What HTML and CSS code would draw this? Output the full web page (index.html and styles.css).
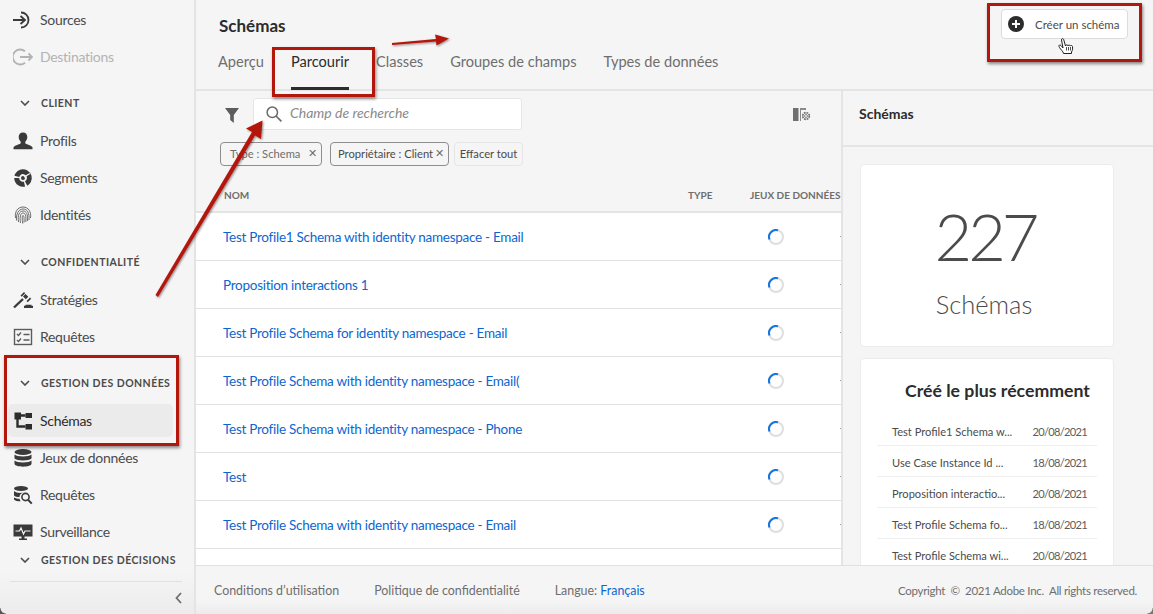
FILE: index.html
```html
<!DOCTYPE html>
<html lang="fr">
<head>
<meta charset="utf-8">
<title>Schémas</title>
<link rel="stylesheet" href="styles.css">
</head>
<body>
<div class="app">
  <aside class="sidebar">
    <nav class="nav">
      <a class="item"><svg class="ico" viewBox="0 0 20 20"><path d="M8 2.500a7.500 7.500 0 1 1 0 15" fill="none" stroke="#3a3a3a" stroke-width="1.8"/><path d="M0 10h11M7.500 6l4.500 4-4.500 4" fill="none" stroke="#3a3a3a" stroke-width="1.8"/></svg>Sources</a>
      <a class="item off"><svg class="ico" viewBox="0 0 20 20"><path d="M12 4.200A7.500 7.500 0 1 0 12 15.800" fill="none" stroke="#b3b3b3" stroke-width="1.8"/><path d="M7 10h12M15.500 6.500l3.500 3.500-3.500 3.500" fill="none" stroke="#b3b3b3" stroke-width="1.8"/></svg>Destinations</a>

      <div class="sec"><svg class="chev" viewBox="0 0 10 6"><path d="M1 1l4 4 4-4" fill="none" stroke="#4b4b4b" stroke-width="1.6"/></svg>CLIENT</div>
      <a class="item"><svg class="ico" viewBox="0 0 20 20"><path d="M10 1.500c2.800 0 4.300 2 4.300 4.500 0 2-1 3.700-2 4.700v1.500c0 1 5.700 1.500 7.200 4v2H.5v-2c1.500-2.500 7.200-3 7.200-4v-1.500c-1-1-2-2.700-2-4.700 0-2.500 1.500-4.500 4.300-4.500z" fill="#3a3a3a"/></svg>Profils</a>
      <a class="item"><svg class="ico" viewBox="0 0 20 20"><circle cx="10" cy="10" r="6.300" fill="none" stroke="#3a3a3a" stroke-width="5" stroke-dasharray="13 1.600 11 1.600 11.400 1.600" transform="rotate(-60 10 10)"/><circle cx="10" cy="10" r="2" fill="#3a3a3a"/><path d="M11 9l6-3.500" stroke="#f5f5f5" stroke-width="1.300"/></svg>Segments</a>
      <a class="item"><svg class="ico" viewBox="0 0 20 20"><g fill="none" stroke="#5c5c5c" stroke-width=".9"><path d="M2.500 13C1.500 7 4.500 2 10 2s8.500 5 7.500 11"/><path d="M3.500 15.500C3 9 5.500 4 10 4s6.500 4 6 11"/><path d="M5.500 17C4.500 10 6.500 6 10 6s5 3.500 4.500 10"/><path d="M7.500 18C6.500 12 7.500 8 10 8s3.300 3 2.800 9"/><path d="M9.800 18.500C9 14 9 10.500 10 10.500s1.300 3 1 7"/></g></svg>Identités</a>

      <div class="sec tall"><svg class="chev" viewBox="0 0 10 6"><path d="M1 1l4 4 4-4" fill="none" stroke="#4b4b4b" stroke-width="1.6"/></svg>CONFIDENTIALITÉ</div>
      <a class="item"><svg class="ico" viewBox="0 0 20 20"><path d="M1 17.500L10 9" stroke="#3a3a3a" stroke-width="2.400" fill="none"/><path d="M7.500 5.500l3.500-3.500 1.200 1.200-3.500 3.500zM10 6.500l2.500-2.500 2.800 2.800-2.500 2.500zM13.500 11l3.500-3.500 1.200 1.200-3.500 3.500z" fill="#3a3a3a"/><path d="M11 18h9v-2.200h-1.500v-1H12.500v1H11z" fill="#3a3a3a"/></svg>Stratégies</a>
      <a class="item"><svg class="ico" viewBox="0 0 20 20"><rect x="1.500" y="2.500" width="17" height="15" fill="none" stroke="#5c5c5c" stroke-width="1.400"/><path d="M4 7l1.500 1.500L8 5.500M4 13l1.500 1.500L8 11.500M10.500 7.500h6M10.500 13h6" fill="none" stroke="#5c5c5c" stroke-width="1.400"/></svg>Requêtes</a>

      <div class="sec"><svg class="chev" viewBox="0 0 10 6"><path d="M1 1l4 4 4-4" fill="none" stroke="#4b4b4b" stroke-width="1.6"/></svg>GESTION DES DONNÉES</div>
      <a class="item on"><svg class="ico" viewBox="0 0 20 20"><path d="M1.500 1.500h6.500v7H1.500zM12.500 2h6.500v5h-6.500zM12.500 13h6.500v5.500h-6.500z" fill="#2c2c2c"/><path d="M4.500 8v7.500h8M8 4.500h4.500" fill="none" stroke="#2c2c2c" stroke-width="2.400"/></svg>Schémas</a>
      <a class="item"><svg class="ico" viewBox="0 0 20 20"><ellipse cx="10" cy="4" rx="8.500" ry="3" fill="#3a3a3a"/><path d="M1.500 6.500c2 2.600 15 2.600 17 0v4c-2 2.600-15 2.600-17 0zM1.500 12.500c2 2.600 15 2.600 17 0V16c-1 3.500-16 3.500-17 0z" fill="#3a3a3a"/></svg>Jeux de données</a>
      <a class="item"><svg class="ico" viewBox="0 0 20 20"><ellipse cx="8" cy="3.500" rx="7" ry="2.500" fill="#3a3a3a"/><path d="M1 6c1.500 2 7 2.300 9 1.500-2.500 1-3.500 3-3.500 4.500C4 12 2 11.500 1 10.500zM1 12.500c1.500 1 3.500 1.200 5.500 1.300.2 1 .6 1.700 1.200 2.500-3 0-6-.5-6.700-1.800z" fill="#3a3a3a"/><circle cx="12.500" cy="12" r="3.600" fill="none" stroke="#3a3a3a" stroke-width="1.600"/><path d="M15 14.800l3.800 3.800" stroke="#3a3a3a" stroke-width="2"/></svg>Requêtes</a>
      <a class="item"><svg class="ico" viewBox="0 0 20 20"><path d="M.5 2.500h19v12H11.500v2h2.500v1.500H6v-1.500h2.500v-2H.5z" fill="#3a3a3a"/><path d="M2.500 9h4l1.500-3 2.500 6 1.500-3h5.500" fill="none" stroke="#f5f5f5" stroke-width="1.200"/></svg>Surveillance</a>
      <div class="sec last"><svg class="chev" viewBox="0 0 10 6"><path d="M1 1l4 4 4-4" fill="none" stroke="#4b4b4b" stroke-width="1.6"/></svg>GESTION DES DÉCISIONS</div>
    </nav>
    <div class="collapse"><svg class="back" viewBox="0 0 7 12"><path d="M6 1L1.500 6 6 11" fill="none" stroke="#6e6e6e" stroke-width="1.800"/></svg></div>
  </aside>

  <main class="main">
    <header class="head">
      <div class="head-top">
        <h1 class="title">Schémas</h1>
        <button class="create"><svg class="plus" viewBox="0 0 16 16"><circle cx="8" cy="8" r="8" fill="#2c2c2c"/><path d="M8 4v8M4 8h8" stroke="#fff" stroke-width="2"/></svg>Créer un schéma</button>
      </div>
      <div class="tabs">
        <a class="tab">Aperçu</a>
        <a class="tab active">Parcourir</a>
        <a class="tab">Classes</a>
        <a class="tab">Groupes de champs</a>
        <a class="tab">Types de données</a>
      </div>
    </header>

    <div class="content">
      <section class="list">
        <div class="tools">
          <svg class="filter" viewBox="0 0 14 15"><path d="M0 0h14L8.800 7v8l-3.600-3V7z" fill="#5c5c5c"/></svg>
          <div class="search">
            <svg class="glass" viewBox="0 0 16 16"><circle cx="6.300" cy="6.300" r="5.200" fill="none" stroke="#6a6a6a" stroke-width="1.500"/><path d="M10 10l5.400 5.400" stroke="#6a6a6a" stroke-width="1.700"/></svg>
            <span class="ph">Champ de recherche</span>
          </div>
          <svg class="cols" viewBox="0 0 18 15"><rect x="0" y="1" width="5.500" height="13" fill="#707070"/><path d="M7.500 1v13" stroke="#8a8a8a" stroke-width="1"/><path d="M8 1h5v2H8z" fill="#8a8a8a"/><circle cx="13" cy="9" r="3.300" fill="none" stroke="#707070" stroke-width="1.700" stroke-dasharray="1.800 .8"/><circle cx="13" cy="9" r="1.500" fill="none" stroke="#707070" stroke-width=".8"/></svg>
        </div>
        <div class="chips">
          <span class="chip dim w1">Type : Schema<i class="x">✕</i></span>
          <span class="chip w2">Propriétaire : Client<i class="x">✕</i></span>
          <span class="clear">Effacer tout</span>
        </div>
        <div class="thead"><span class="c-name">NOM</span><span class="c-type">TYPE</span><span class="c-ds">JEUX DE DONNÉES</span></div>
        <div class="row"><a class="c-name link">Test Profile1 Schema with identity namespace - Email</a><svg class="spin" viewBox="0 0 16 16"><circle cx="8" cy="8" r="7" fill="none" stroke="#dedede" stroke-width="2"/><path d="M1.500 10.500A7 7 0 0 1 10 1.300" fill="none" stroke="#1473e6" stroke-width="2"/></svg><i class="dash"></i></div>
        <div class="row"><a class="c-name link">Proposition interactions 1</a><svg class="spin" viewBox="0 0 16 16"><circle cx="8" cy="8" r="7" fill="none" stroke="#dedede" stroke-width="2"/><path d="M1.500 10.500A7 7 0 0 1 10 1.300" fill="none" stroke="#1473e6" stroke-width="2"/></svg><i class="dash"></i></div>
        <div class="row"><a class="c-name link">Test Profile Schema for identity namespace - Email</a><svg class="spin" viewBox="0 0 16 16"><circle cx="8" cy="8" r="7" fill="none" stroke="#dedede" stroke-width="2"/><path d="M1.500 10.500A7 7 0 0 1 10 1.300" fill="none" stroke="#1473e6" stroke-width="2"/></svg><i class="dash"></i></div>
        <div class="row"><a class="c-name link">Test Profile Schema with identity namespace - Email(</a><svg class="spin" viewBox="0 0 16 16"><circle cx="8" cy="8" r="7" fill="none" stroke="#dedede" stroke-width="2"/><path d="M1.500 10.500A7 7 0 0 1 10 1.300" fill="none" stroke="#1473e6" stroke-width="2"/></svg><i class="dash"></i></div>
        <div class="row"><a class="c-name link">Test Profile Schema with identity namespace - Phone</a><svg class="spin" viewBox="0 0 16 16"><circle cx="8" cy="8" r="7" fill="none" stroke="#dedede" stroke-width="2"/><path d="M1.500 10.500A7 7 0 0 1 10 1.300" fill="none" stroke="#1473e6" stroke-width="2"/></svg><i class="dash"></i></div>
        <div class="row"><a class="c-name link">Test</a><svg class="spin" viewBox="0 0 16 16"><circle cx="8" cy="8" r="7" fill="none" stroke="#dedede" stroke-width="2"/><path d="M1.500 10.500A7 7 0 0 1 10 1.300" fill="none" stroke="#1473e6" stroke-width="2"/></svg><i class="dash"></i></div>
        <div class="row"><a class="c-name link">Test Profile Schema with identity namespace - Email</a><svg class="spin" viewBox="0 0 16 16"><circle cx="8" cy="8" r="7" fill="none" stroke="#dedede" stroke-width="2"/><path d="M1.500 10.500A7 7 0 0 1 10 1.300" fill="none" stroke="#1473e6" stroke-width="2"/></svg><i class="dash"></i></div>
        <div class="row"></div>
      </section>

      <aside class="panel">
        <div class="panel-head">Schémas</div>
        <div class="panel-body">
          <div class="card stat">
            <div class="num">227</div>
            <div class="lbl">Schémas</div>
          </div>
          <div class="card recent">
            <h2 class="recent-title">Créé le plus récemment</h2>
            <div class="r-row"><span>Test Profile1 Schema w...</span><span class="date">20/08/2021</span></div>
            <div class="r-row"><span>Use Case Instance Id ...</span><span class="date">18/08/2021</span></div>
            <div class="r-row"><span>Proposition interactio...</span><span class="date">20/08/2021</span></div>
            <div class="r-row"><span>Test Profile Schema fo...</span><span class="date">18/08/2021</span></div>
            <div class="r-row"><span>Test Profile Schema wi...</span><span class="date">20/08/2021</span></div>
          </div>
        </div>
      </aside>
    </div>

    <footer class="foot">
      <a class="f1">Conditions d’utilisation</a>
      <a class="f2">Politique de confidentialité</a>
      <span class="f3">Langue: <a class="fr">Français</a></span>
      <span class="copy">Copyright &nbsp;©&nbsp; 2021 Adobe Inc. &nbsp;All rights reserved.</span>
    </footer>
  </main>
</div>

<div class="mark mark-a"></div>
<div class="mark mark-b"></div>
<div class="mark mark-c"></div>
<div class="corner corner-l"></div>
<div class="corner corner-r"></div>
<svg class="arrows" viewBox="0 0 1153 614">
  <defs><filter id="sh" x="-20%" y="-20%" width="140%" height="140%"><feDropShadow dx="1" dy="1" stdDeviation="1" flood-color="#000" flood-opacity=".45"/></filter></defs>
  <g filter="url(#sh)" fill="#b3160b">
    <path d="M155.500 295L252 132l-6-3.500 16.500-8-1.500 18.500-6-3.500L158 297z"/>
    <path d="M392 43l44-4-1-4.500 14 4-12.500 7-.5-4-44 3.500z"/>
  </g>
  <g fill="#fff" stroke="#222" stroke-width="1">
    <path d="M1063 52c-1.500-2-3.500-4-4-5.500-.5-1.500 1-2 2-1l2 2.500-1.500-8c-.2-1.500 1.800-2 2.200-.4l1.800 6.400c.2-1.600 2.200-1.600 2.500 0 .2-1.300 2-1.300 2.300.1.400-1 2-.8 2.200.5.300 2 .2 3.400-1 5.400v1.500h-8z"/>
    <path d="M1066.500 47v3.500M1068.500 47v3.500M1070.500 47v3.500" fill="none" stroke-width=".8"/>
  </g>
</svg>
</body>
</html>
```

FILE: styles.css
```css
* { box-sizing: border-box; }
html, body { margin: 0; height: 100%; overflow: hidden; }
body { font-family: "Lato", "Open Sans", sans-serif; color: #4b4b4b; background: #f5f5f5; position: relative; }
a { text-decoration: none; color: inherit; }
i { font-style: normal; }

.app { display: grid; grid-template-columns: 196px 1fr; height: 614px; }

.sidebar { display: flex; flex-direction: column; border-right: 2px solid #e4e4e4; background: linear-gradient(#f5f5f5 93%, #ececec); min-height: 0; }
.nav { flex: 1; overflow: hidden; padding: 3px 0 0 8px; }
.item { display: flex; align-items: center; gap: 7px; width: 165px; height: 33px; margin-bottom: 4px; padding-left: 5px; font-size: 14px; letter-spacing: -.3px; border-radius: 5px; color: #4b4b4b; white-space: nowrap; }
.item.off { color: #b3b3b3; }
.item.on { background: #ebebeb; color: #2c2c2c; }
.ico { width: 20px; height: 20px; flex: none; }
.sec { display: flex; align-items: center; gap: 11px; height: 47px; padding: 5px 0 0 12px; font-size: 10.500px; font-weight: 700; letter-spacing: .45px; color: #4b4b4b; white-space: nowrap; }
.sec.tall { height: 48px; padding-top: 6px; }
.sec.last { height: 15px; padding-top: 0; }
.chev { width: 10px; height: 6px; flex: none; }
.collapse { height: 33px; margin: 0 12px 0 10px; border-top: 1px solid #e1e1e1; display: flex; align-items: center; justify-content: flex-end; flex: none; }
.back { width: 7px; height: 12px; }

.main { display: flex; flex-direction: column; min-width: 0; min-height: 0; }
.head { height: 91px; flex: none; border-bottom: 2px solid #e4e4e4; padding: 0 25px 0 22px; }
.head-top { display: flex; justify-content: space-between; align-items: flex-start; height: 47px; }
.title { margin: 15px 0 0 1px; font-size: 17px; font-weight: 700; color: #2c2c2c; line-height: 22px; }
.create { display: flex; align-items: center; gap: 11px; margin: 9px 0 0; width: 127px; height: 30px; padding: 0 0 0 6px; background: #fff; border: 1px solid #dcdcdc; border-radius: 4px; font: 11.500px "Lato", sans-serif; color: #4b4b4b; white-space: nowrap; }
.plus { width: 16px; height: 16px; flex: none; }
.tabs { display: flex; gap: 27px; }
.tab { position: relative; height: 43px; padding-top: 5px; font-size: 14.600px; line-height: 20px; color: #6e6e6e; white-space: nowrap; }
.tab.active { color: #2c2c2c; }
.tab.active::after { content: ""; position: absolute; left: 0; right: 0; bottom: 0; height: 3px; background: #2c2c2c; }

.content { flex: 1; display: flex; min-height: 0; overflow: hidden; }
.list { width: 647px; flex: none; border-right: 2px solid #e4e4e4; overflow: hidden; }
.tools { display: flex; align-items: center; height: 32px; margin-top: 7px; padding-left: 29px; }
.filter { width: 14px; height: 15px; flex: none; margin-top: 3px; }
.search { display: flex; align-items: center; width: 269px; height: 32px; margin-left: 14px; padding-left: 12px; background: #fff; border: 1px solid #e6e6e6; border-radius: 3px; }
.glass { width: 16px; height: 16px; flex: none; }
.ph { margin-left: 8px; padding-bottom: 3px; font-size: 14px; font-style: italic; color: #8a8a8a; }
.cols { width: 18px; height: 15px; margin-left: 271px; }
.chips { display: flex; align-items: center; height: 24px; margin: 12px 0 0 24px; font-size: 11.200px; }
.chip { display: flex; align-items: center; justify-content: space-between; height: 24px; padding: 0 4px 2px 9px; border: 1px solid #8e8e8e; border-radius: 4px; color: #4b4b4b; white-space: nowrap; }
.chip.dim { color: #6e6e6e; }
.w1 { width: 102px; margin-right: 8px; }
.w2 { width: 119px; padding-left: 7px; margin-right: 5px; }
.x { font-size: 11px; color: #6e6e6e; }
.clear { display: flex; align-items: center; height: 24px; width: 69px; padding-bottom: 2px; justify-content: center; border: 1px solid #e6e6e6; border-radius: 4px; white-space: nowrap; }
.thead { display: flex; align-items: flex-end; height: 47px; padding: 0 0 10px 28px; font-size: 10px; font-weight: 700; letter-spacing: 0; color: #6e6e6e; border-bottom: 2px solid #e4e4e4; white-space: nowrap; }
.thead .c-name { width: 464px; flex: none; }
.thead .c-type { width: 62px; flex: none; }
.row { display: flex; align-items: center; height: 48px; padding-left: 27px; background: #fff; border-bottom: 1px solid #e1e1e1; }
.row .c-name { width: 545px; flex: none; }
.link { font-size: 13.500px; letter-spacing: -.27px; color: #0d66d0; white-space: nowrap; }
.spin { width: 16px; height: 16px; flex: none; margin-top: 1px; }
.dash { width: 3px; height: 1px; margin-left: 56px; background: #999; flex: none; }

.panel { flex: 1; min-width: 0; display: flex; flex-direction: column; }
.panel-head { height: 56px; flex: none; padding: 14px 0 0 16px; font-size: 14px; font-weight: 700; color: #2c2c2c; line-height: 18px; border-bottom: 2px solid #e4e4e4; }
.panel-body { flex: 1; padding: 17px 39px 0 17px; overflow: hidden; }
.card { background: #fff; border: 1px solid #ececec; border-radius: 4px; }
.stat { height: 183px; text-align: center; margin-bottom: 11px; }
.num { font-size: 65px; font-weight: 300; letter-spacing: -4px; line-height: 80px; margin-top: 31px; padding-right: 4px; color: #4b4b4b; }
.lbl { font-size: 25.500px; font-weight: 300; line-height: 34px; margin-top: 11px; padding-right: 6px; color: #4b4b4b; }
.recent { padding: 0 16px; height: 260px; }
.recent-title { margin: 21px 0 0 28px; font-size: 17.700px; font-weight: 700; line-height: 22px; color: #2c2c2c; white-space: nowrap; }
.recent-title + .r-row { margin-top: 13px; }
.r-row { display: flex; justify-content: space-between; align-items: center; height: 31px; padding: 2px 10px 0 15px; font-size: 11.100px; color: #4b4b4b; border-bottom: 1px solid #efefef; white-space: nowrap; }
.date { letter-spacing: -.7px; color: #5c5c5c; }

.foot { height: 49px; flex: none; display: flex; align-items: center; padding: 0 16px 0 18px; font-size: 12.400px; color: #6e6e6e; border-top: 1px solid #e1e1e1; background: linear-gradient(#f5f5f5 70%, #ececec); white-space: nowrap; }
.f1 { margin-right: 35px; }
.f2 { margin-right: 35px; }
.fr { color: #0d66d0; }
.copy { margin-left: auto; font-size: 11.500px; letter-spacing: -.28px; }

.mark { position: absolute; border: 3px solid #b3160b; box-shadow: 1px 2px 3px rgba(0,0,0,.45); pointer-events: none; }
.mark-a { left: 4px; top: 355px; width: 175px; height: 91px; }
.mark-b { left: 272px; top: 47px; width: 103px; height: 50px; }
.mark-c { left: 987px; top: 3px; width: 155px; height: 59px; }
.corner { position: absolute; bottom: 0; width: 6px; height: 6px; }
.corner-l { left: 0; background: radial-gradient(circle at 100% 0, transparent 5px, #555 6px); }
.corner-r { right: 0; background: radial-gradient(circle at 0 0, transparent 5px, #777 6px); }
.arrows { position: absolute; left: 0; top: 0; width: 1153px; height: 614px; pointer-events: none; }
```
